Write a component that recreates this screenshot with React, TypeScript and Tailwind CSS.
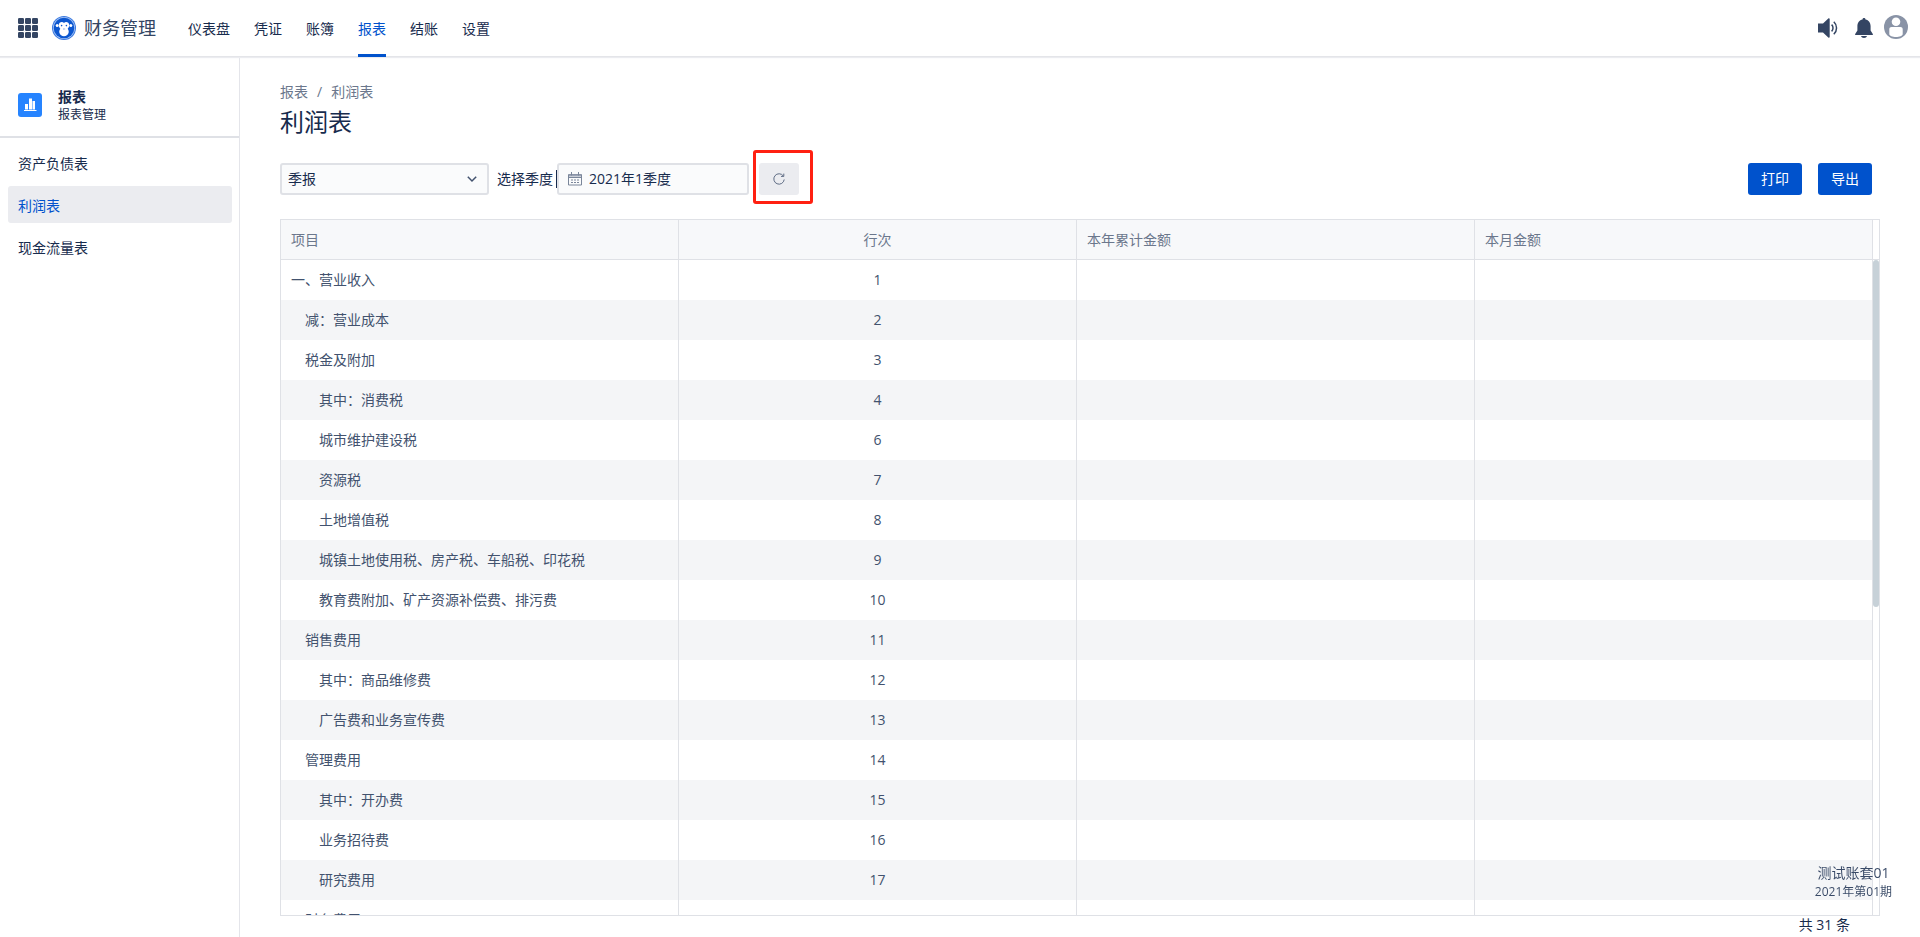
import React from "react";

type Row = { name: string; level: 0 | 1 | 2; line: number };

const rows: Row[] = [
  { name: "一、营业收入", level: 0, line: 1 },
  { name: "减：营业成本", level: 1, line: 2 },
  { name: "税金及附加", level: 1, line: 3 },
  { name: "其中：消费税", level: 2, line: 4 },
  { name: "城市维护建设税", level: 2, line: 6 },
  { name: "资源税", level: 2, line: 7 },
  { name: "土地增值税", level: 2, line: 8 },
  { name: "城镇土地使用税、房产税、车船税、印花税", level: 2, line: 9 },
  { name: "教育费附加、矿产资源补偿费、排污费", level: 2, line: 10 },
  { name: "销售费用", level: 1, line: 11 },
  { name: "其中：商品维修费", level: 2, line: 12 },
  { name: "广告费和业务宣传费", level: 2, line: 13 },
  { name: "管理费用", level: 1, line: 14 },
  { name: "其中：开办费", level: 2, line: 15 },
  { name: "业务招待费", level: 2, line: 16 },
  { name: "研究费用", level: 2, line: 17 },
  { name: "财务费用", level: 1, line: 18 },
];

const indent = { 0: "pl-[10px]", 1: "pl-6", 2: "pl-[38px]" };

const navItems = ["仪表盘", "凭证", "账簿", "报表", "结账", "设置"];
const sideItems = ["资产负债表", "利润表", "现金流量表"];

function GridIcon() {
  return (
    <svg width="20" height="20" viewBox="0 0 20 20" fill="#344563">
      {[0, 7, 14].map((y) =>
        [0, 7, 14].map((x) => <rect key={`${x}-${y}`} x={x} y={y} width="6" height="6" rx="1.3" />)
      )}
    </svg>
  );
}

function Logo() {
  return (
    <svg width="24" height="24" viewBox="0 0 24 24">
      <circle cx="12" cy="12" r="12" fill="#3d7be0" />
      <circle cx="12" cy="12" r="11" fill="#a9c6f5" />
      <circle cx="12" cy="12" r="10.3" fill="#0c57d0" />
      <circle cx="5.2" cy="9.6" r="1.5" fill="#fff" />
      <circle cx="18.8" cy="9.6" r="1.5" fill="#fff" />
      <path
        d="M12 7c1.200-1.700 5.200-1.500 5.200 2.300 0 1.600-.7 2.600-1.500 3.400.9 1.200 1.300 2.700.9 4.100-.6 2.100-2.400 3.400-4.600 3.400s-4-1.300-4.600-3.400c-.4-1.400 0-2.900.9-4.100-.8-.8-1.500-1.800-1.500-3.400C6.800 5.500 10.800 5.300 12 7z"
        fill="#fff"
      />
      <circle cx="9.600" cy="9.600" r=".8" fill="#0c57d0" />
      <circle cx="14.400" cy="9.600" r=".8" fill="#0c57d0" />
      <path d="M11 13h.6M12.500 13h.6" stroke="#0c57d0" strokeWidth=".8" />
    </svg>
  );
}

function SpeakerIcon() {
  return (
    <svg width="20" height="20" viewBox="0 0 20 20">
      <path d="M0 5.500h5L10.300.4c.6-.5 1.400-.2 1.400.6v18c0 .8-.8 1.100-1.400.6L5 14.500H0z" fill="#344563" />
      <path d="M13.600 6.600a4.800 4.800 0 0 1 0 6.800M15.800 3.700a8.600 8.600 0 0 1 0 12.600" fill="none" stroke="#344563" strokeWidth="1.500" />
    </svg>
  );
}

function BellIcon() {
  return (
    <svg width="18" height="20" viewBox="0 0 18 20" fill="#344563">
      <path d="M9 0c.9 0 1.500.6 1.500 1.400C13.700 2 15.600 4.700 15.600 8v4.600L17.800 16c.3.500 0 1-.6 1H.8c-.6 0-.9-.5-.6-1l2.200-3.400V8c0-3.300 1.900-6 5.100-6.600C7.500.6 8.100 0 9 0z" />
      <path d="M6 18h6c-.3 1.200-1.500 2-3 2s-2.700-.8-3-2z" />
    </svg>
  );
}

function AvatarIcon() {
  return (
    <svg width="24" height="24" viewBox="0 0 24 24">
      <circle cx="12" cy="12" r="12" fill="#8993a6" />
      <circle cx="12" cy="6.800" r="4.300" fill="#fff" />
      <path d="M5.300 14.200c0-1.400 1-2.200 2.300-2.200h8.800c1.300 0 2.300.8 2.300 2.200V19c0 1.800-3.200 3-6.700 3s-6.700-1.200-6.700-3z" fill="#fff" />
    </svg>
  );
}

function ReportIcon() {
  return (
    <svg width="24" height="24" viewBox="0 0 24 24">
      <rect width="24" height="24" rx="3" fill="#2684ff" />
      <path d="M7 11h3v5.500H7zM11 5.500h3v11h-3zM14.500 8h2.500v8.500h-2.500zM6 17h12.500v1H6z" fill="#fff" />
    </svg>
  );
}

function CalendarIcon() {
  return (
    <svg width="14" height="14" viewBox="0 0 14 14" fill="none" stroke="#7a869a">
      <path d="M.5 2.500h13v10.500H.5z" />
      <path d="M1 3.500h12" stroke="#9aa3b5" strokeWidth="2" />
      <path d="M1 5.500h12" />
      <path d="M3.500 0v3.500M10.500 0v3.500" />
      <path d="M3 8h8M3 10.500h8" strokeDasharray="2 1" />
    </svg>
  );
}

function RefreshIcon() {
  return (
    <svg width="12" height="12" viewBox="0 0 12 12" fill="none" stroke="#5e6c84">
      <path d="M10.300 3A5.200 5.200 0 1 0 11.200 6.500" />
      <path d="M10.800.6V3.400H8" />
    </svg>
  );
}

export default function App() {
  return (
    <div className="flex h-screen flex-col overflow-hidden bg-white font-['Open_Sans','Noto_Sans_CJK_SC',sans-serif] text-sm leading-5 text-[#172b4d]">
      <header className="relative box-content flex h-14 shrink-0 items-center border-b border-[#e4e5e9] pr-3 pl-[18px] shadow-[0_1px_1px_#ebecf0]">
        <button aria-label="应用">
          <GridIcon />
        </button>
        <a href="#" className="ml-[14px] flex items-center gap-2 text-lg leading-6 text-[#344563]">
          <Logo />
          财务管理
        </a>
        <nav className="ml-8 flex gap-6 self-stretch">
          {navItems.map((item) => (
            <a
              key={item}
              href="#"
              className={
                item === "报表"
                  ? "-mb-px flex items-center border-b-3 border-[#0052cc] pt-1 text-[#0052cc]"
                  : "-mb-px flex items-center border-b-3 border-transparent pt-1"
              }
            >
              {item}
            </a>
          ))}
        </nav>
        <div className="ml-auto flex items-center">
          <button aria-label="公告">
            <SpeakerIcon />
          </button>
          <button aria-label="通知" className="ml-[17px]">
            <BellIcon />
          </button>
          <button aria-label="用户" className="mb-0.5 ml-[11px]">
            <AvatarIcon />
          </button>
        </div>
      </header>

      <div className="flex min-h-0 flex-1">
        <aside className="w-60 shrink-0 border-r border-[#e4e5ea]">
          <div className="flex h-[81px] items-center gap-4 border-b-2 border-[#dfe1e6] pt-4 pl-[18px]">
            <ReportIcon />
            <div>
              <div className="leading-5 font-bold">报表</div>
              <div className="text-xs leading-4">报表管理</div>
            </div>
          </div>
          <nav className="flex flex-col gap-[5px] pt-[6px] pr-[7px] pl-2">
            {sideItems.map((item) => (
              <a
                key={item}
                href="#"
                className={
                  item === "利润表"
                    ? "flex h-[37px] items-center rounded-[3px] bg-[#ebecf0] px-[10px] pt-0.5 text-[#0052cc]"
                    : "flex h-[37px] items-center rounded-[3px] px-[10px] pt-0.5"
                }
              >
                {item}
              </a>
            ))}
          </nav>
        </aside>

        <main className="flex min-w-0 flex-1 flex-col px-10 pt-[25px]">
          <div className="flex gap-[9px] text-[#6b778c]">
            <a href="#">报表</a>
            <span>/</span>
            <a href="#">利润表</a>
          </div>
          <h1 className="mt-1 text-2xl leading-8">利润表</h1>

          <div className="mt-[25px] flex h-8 shrink-0 items-center pr-2">
            <div className="relative h-8 w-[209px]">
              <select
                aria-label="报表类型"
                className="h-8 w-full appearance-none rounded-[3px] border-2 border-[#dfe1e6] bg-[#fafbfc] pl-[6px]"
              >
                <option>季报</option>
              </select>
              <svg className="pointer-events-none absolute top-3 right-3" width="10" height="8" viewBox="0 0 10 8" fill="none" stroke="#42526e" strokeWidth="1.500">
                <path d="M.8 1.800 5 6l4.200-4.200" />
              </svg>
            </div>
            <label htmlFor="quarter" className="ml-2">
              选择季度
            </label>
            <div className="ml-[3px] h-[18px] w-px bg-[#172b4d]" />
            <div className="flex h-8 w-48 items-center gap-[7px] rounded-[3px] border-2 border-[#dfe1e6] bg-[#fafbfc] pl-[9px]">
              <CalendarIcon />
              <input id="quarter" defaultValue="2021年1季度" className="w-36 bg-transparent outline-none" />
            </div>
            <div className="relative ml-[10px]">
              <button aria-label="刷新" className="flex h-8 w-10 items-center justify-center rounded-[3px] bg-[#ebecf0]">
                <RefreshIcon />
              </button>
              <div className="pointer-events-none absolute -top-[13px] -left-[6px] h-[54px] w-[60px] rounded-[3px] border-3 border-[#ff2011]" />
            </div>
            <div className="ml-auto flex gap-4">
              <button className="h-8 w-[54px] rounded-[3px] bg-[#0052cc] text-white">打印</button>
              <button className="h-8 w-[54px] rounded-[3px] bg-[#0052cc] text-white">导出</button>
            </div>
          </div>

          <div className="mt-6 flex min-h-0 flex-1 border border-[#dfe1e6]">
            <div className="min-w-0 flex-1 overflow-y-auto [scrollbar-width:none]">
              <table className="w-full table-fixed border-separate border-spacing-0">
                <thead className="sticky top-0 bg-[#f7f8fa] text-[#6b778c]">
                  <tr className="h-10">
                    <th className="border-r border-b border-[#dfe1e6] p-0 pl-[10px] text-left font-normal">项目</th>
                    <th className="border-r border-b border-[#dfe1e6] p-0 text-center font-normal">行次</th>
                    <th className="border-r border-b border-[#dfe1e6] p-0 pl-[10px] text-left font-normal">本年累计金额</th>
                    <th className="border-r border-b border-[#dfe1e6] p-0 pl-[10px] text-left font-normal">本月金额</th>
                  </tr>
                </thead>
                <tbody className="text-[#42526e]">
                  {rows.map((row) => (
                    <tr key={row.line} className="h-10 even:bg-[#f4f5f7]">
                      <td className={`border-r border-[#dfe1e6] py-0 pr-0 ${indent[row.level]}`}>{row.name}</td>
                      <td className="border-r border-[#dfe1e6] p-0 text-center">{row.line}</td>
                      <td className="border-r border-[#dfe1e6] p-0" />
                      <td className="border-r border-[#dfe1e6] p-0" />
                    </tr>
                  ))}
                </tbody>
              </table>
            </div>
            <div className="flex w-[6px] shrink-0 flex-col">
              <div className="h-10 shrink-0 border-b border-[#dfe1e6]" />
              <div className="flex-1">
                <div className="h-[53%] rounded-full bg-[#c7d1d8]" />
              </div>
            </div>
          </div>
          <div className="h-[21px] shrink-0 pr-[30px] text-right leading-[18px]">共 31 条</div>
        </main>
      </div>

      <div className="pointer-events-none fixed right-7 bottom-9 text-center opacity-85">
        <div className="leading-5">测试账套01</div>
        <div className="text-xs leading-[18px]">2021年第01期</div>
      </div>
    </div>
  );
}
